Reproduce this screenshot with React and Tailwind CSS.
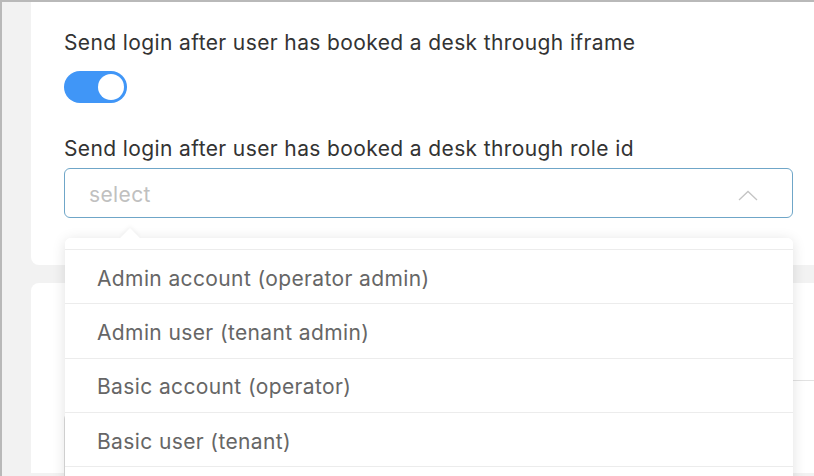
const roles = [
  'Admin account (operator admin)',
  'Admin user (tenant admin)',
  'Basic account (operator)',
  'Basic user (tenant)',
]

const ChevronUp = () => (
  <svg width="20" height="11" viewBox="0 0 20 11" fill="none">
    <path d="M1 10L10 1.5L19 10" stroke="#c4c4c4" strokeWidth="1.3" />
  </svg>
)

const App = () => {
  return (
    <div
      className="relative h-[476px] w-[814px] overflow-hidden border-t-2 border-l-2 border-[#b9b9b9] bg-[#f2f2f2] text-[#333]"
      style={{ fontFamily: 'Inter, "Noto Sans", sans-serif' }}
    >
      <div className="ml-[29px] flex flex-col gap-[18px]">
        <div className="w-[800px] rounded-b-lg bg-white pb-[47px] pl-[33px] pr-[20px] pt-[28px]">
          <p className="text-[21px] leading-[26px] tracking-[0.38px] text-[#333]">
            Send login after user has booked a desk through iframe
          </p>
          <button className="mt-[15px] flex h-[32px] w-[63px] items-center justify-end rounded-full bg-[#4096f7] px-[3px]">
            <span className="h-[26px] w-[26px] rounded-full bg-white" />
          </button>
          <p className="mt-[33px] text-[21px] leading-[26px] tracking-[0.38px] text-[#333]">
            Send login after user has booked a desk through role id
          </p>
          <div className="mt-[6px] w-[729px]">
            <div className="flex h-[50px] items-center justify-between rounded-md border border-[#6fa6c8] pl-[24px] pr-[34px] pt-[4px]">
              <span className="text-[21px] tracking-[0.38px] text-[#c0c0c0]">select</span>
              <ChevronUp />
            </div>
          </div>
        </div>
        <div className="relative h-[190px] w-[800px] rounded-t-lg bg-white">
          <div className="absolute left-[33px] top-[130px] h-[80px] w-[729px] rounded-md border border-[#dcdcdc]" />
          <div className="absolute left-[762px] top-[97px] h-px w-[40px] bg-[#e2e2e2]" />
        </div>
      </div>

      <div className="absolute left-[63px] top-[236px] w-[728px] rounded-md bg-white shadow-[0_2px_14px_rgba(0,0,0,0.12)]">
        <div className="absolute -top-[7px] left-[58px] h-[14px] w-[14px] rotate-45 bg-white shadow-[-2px_-2px_4px_rgba(0,0,0,0.04)]" />
        <div className="relative h-[12px] rounded-t-md border-b border-[#ececec] bg-white" />
        {roles.map((role, i) => (
          <div
            key={i}
            className="flex h-[54.3px] items-center border-b border-[#ececec] pl-[32px] pt-[4px] text-[21px] tracking-[0.38px] text-[#666]"
          >
            {role}
          </div>
        ))}
        <div className="h-[20px]" />
      </div>
    </div>
  )
}

export default App
